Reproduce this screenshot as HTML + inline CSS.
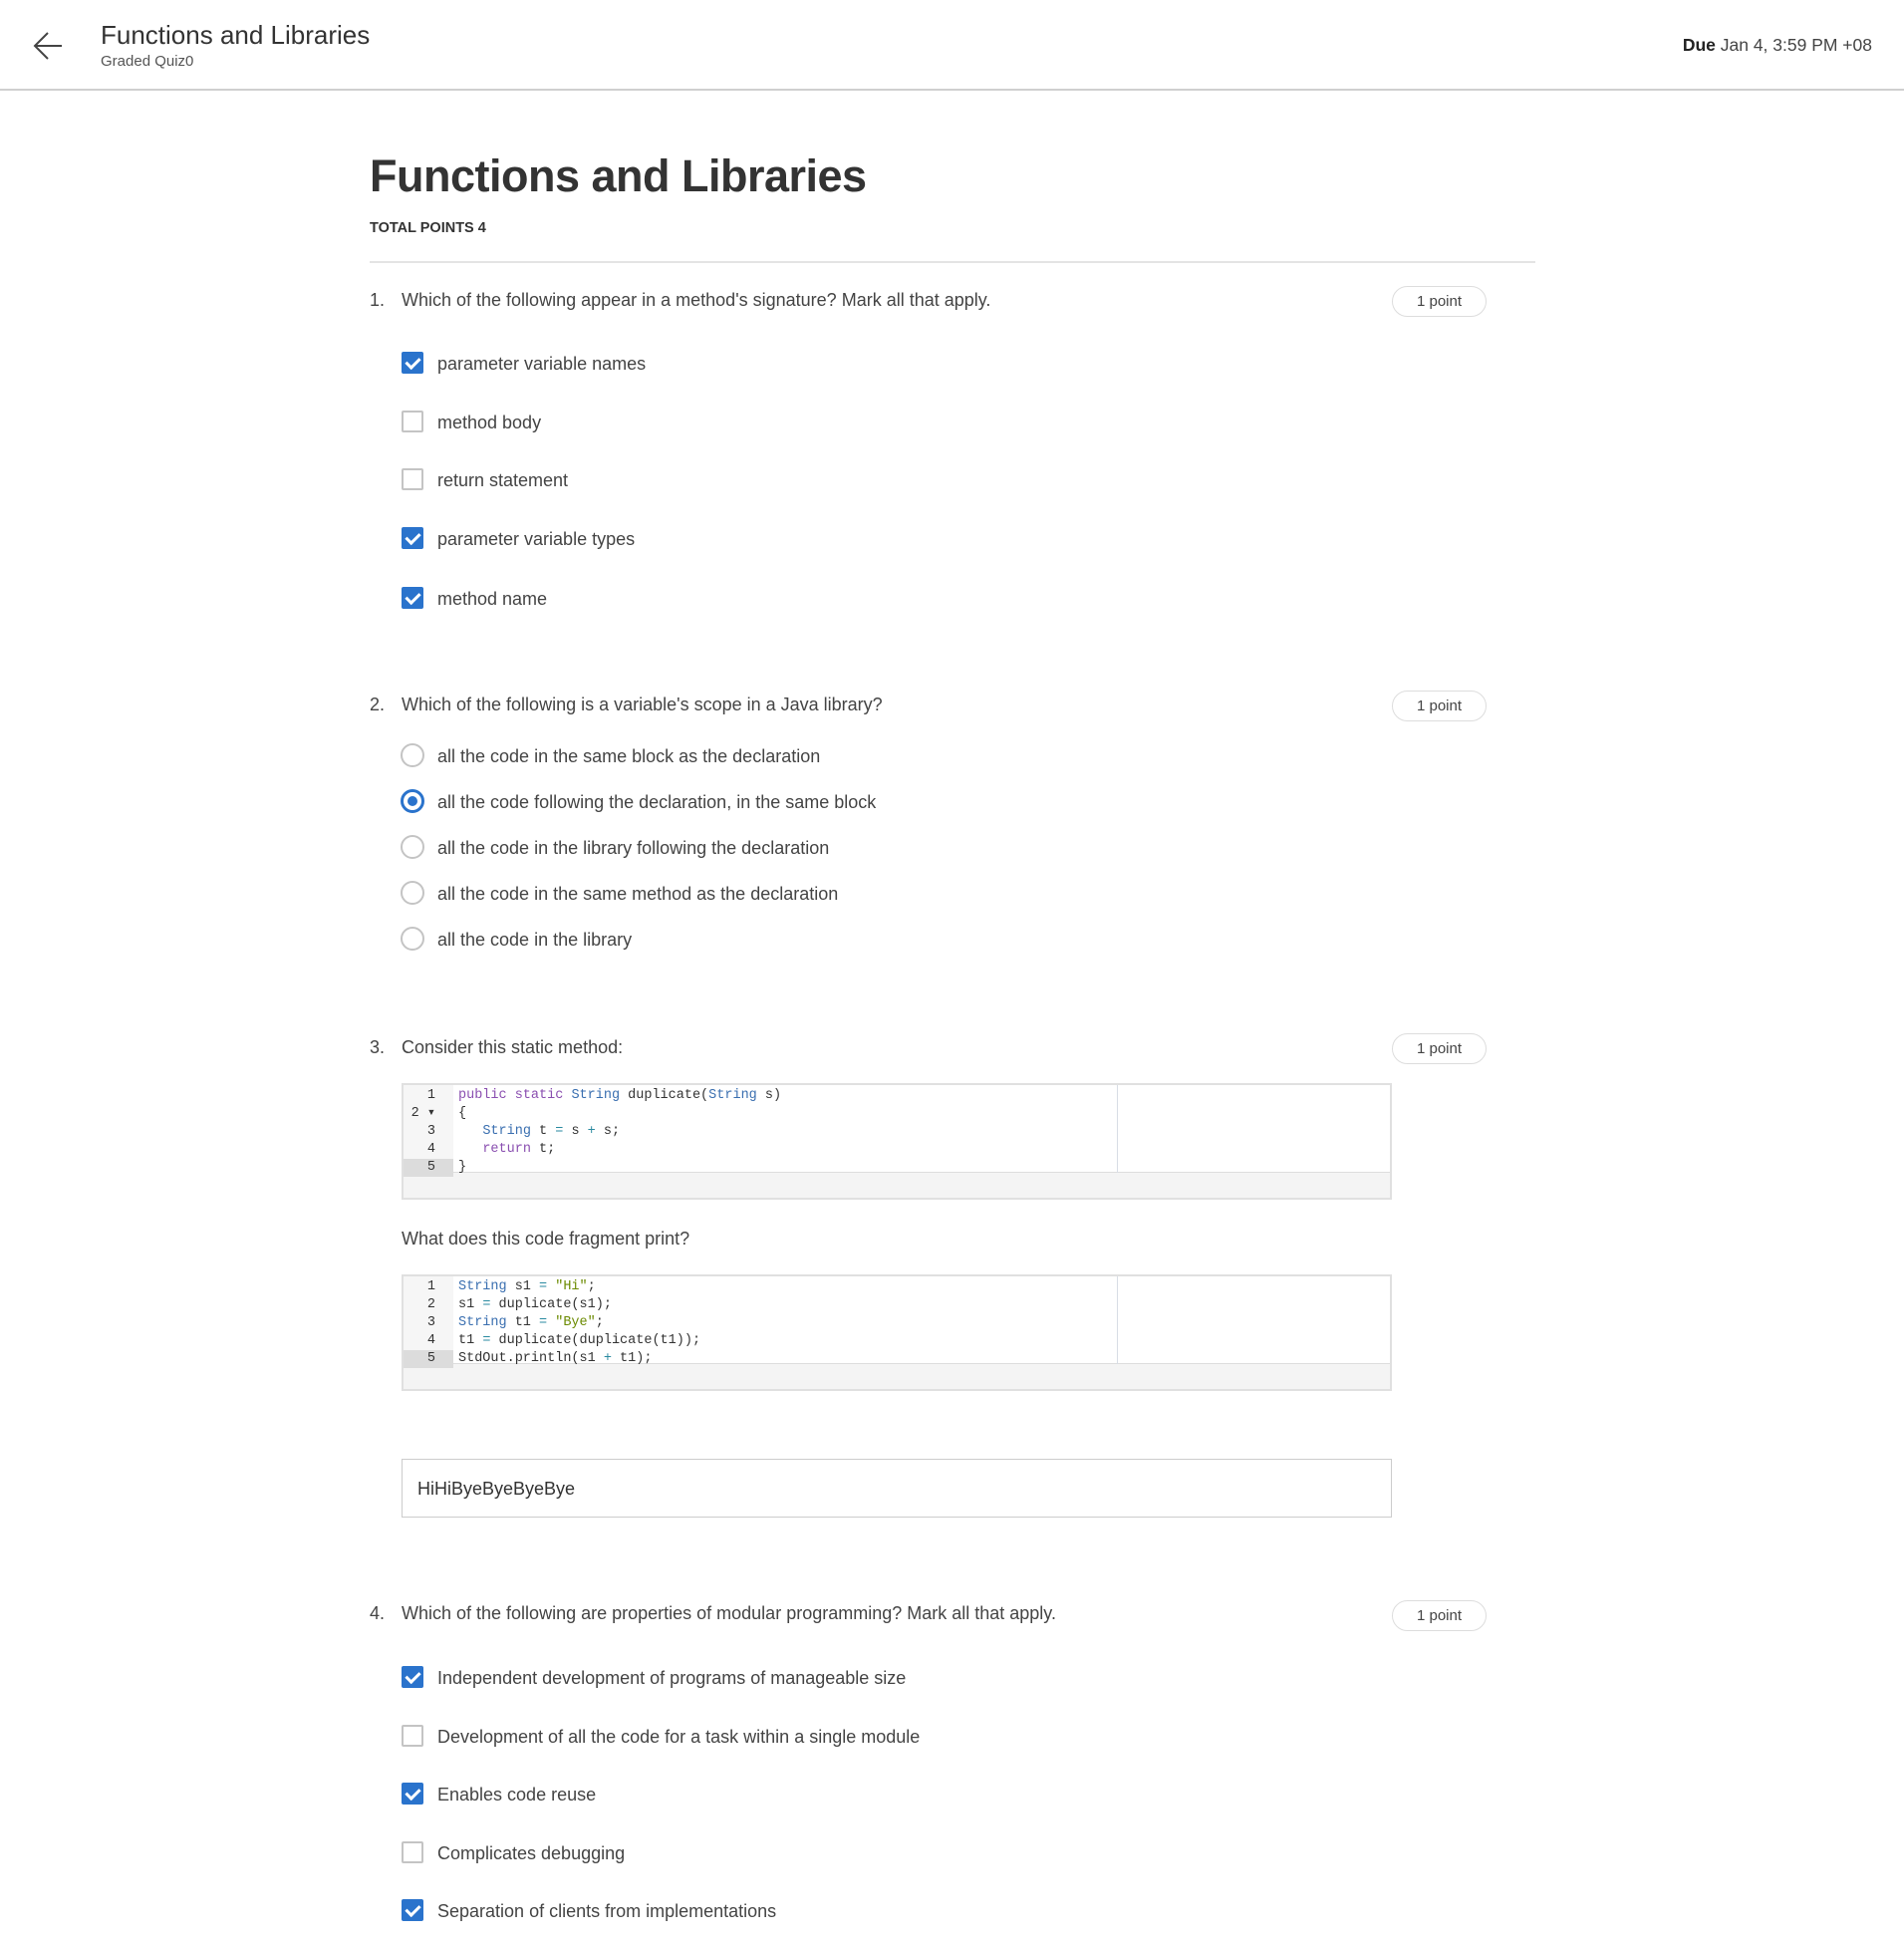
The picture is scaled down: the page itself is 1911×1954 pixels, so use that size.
<!DOCTYPE html>
<html><head><meta charset="utf-8"><style>
*{margin:0;padding:0;box-sizing:border-box}
body{width:1911px;height:1954px;background:#fff;font-family:"Liberation Sans",sans-serif;color:#3b3b3b;position:relative;overflow:hidden}
.a{position:absolute;white-space:nowrap}
.t{font-size:18px;color:#444;line-height:22px;margin-top:1px}
.cb{position:absolute;left:403px;width:22px;height:22px;border:2px solid #c4c4c4;border-radius:2px;background:#fff}
.cb.on{background:#2a73cc;border-color:#2a73cc}
.cb.on::after{content:"";position:absolute;left:5px;top:1px;width:6px;height:11px;border:solid #fff;border-width:0 3px 3px 0;transform:rotate(45deg)}
.rd{position:absolute;left:402px;width:24px;height:24px;border:2px solid #c4c4c4;border-radius:50%}
.rd.on{border:3px solid #2a73cc}
.rd.on::after{content:"";position:absolute;left:4px;top:4px;width:10px;height:10px;border-radius:50%;background:#2a73cc}
.pill{position:absolute;left:1397px;width:95px;height:31px;border:1px solid #ddd;border-radius:16px;font-size:15px;color:#444;text-align:center;line-height:29px}
.code{position:absolute;left:403px;width:994px;height:117px;border:2px solid #e0e0e0;background:#f4f4f4}
.code .in{position:absolute;left:0;top:0;right:0;height:88px;background:#fff;border-bottom:1px solid #ddd;font-family:"Liberation Mono",monospace;font-size:13.5px;line-height:18px;padding-top:2px}
.code .gut{position:absolute;left:0;top:0;width:50px;height:87px;background:#f6f6f6}
.code .div{position:absolute;left:716px;top:0;width:1px;height:88px;background:#d8dde5}
.ln{position:relative;height:18px;color:#333}
.ln .n{position:absolute;left:0;width:32px;text-align:right;color:#333}
.ln .c{position:absolute;left:55px}
.ln.last .n{background:#dcdcdc;width:50px;padding-right:18px}
.k{color:#8a4fb0}.s{color:#3a6fb0}.g{color:#6b8a00}.o{color:#2a8aa0}
</style></head><body>
<div class="a" style="left:0;top:89px;width:1911px;height:2px;background:#cfcfcf"></div>
<svg class="a" style="left:32px;top:30px" width="34" height="32" viewBox="0 0 34 32"><path d="M30 16H3M16 3L3 16l13 13" fill="none" stroke="#444" stroke-width="2"/></svg>
<div class="a" style="left:101px;top:20px;font-size:26px;color:#333">Functions and Libraries</div>
<div class="a" style="left:101px;top:53px;font-size:15px;color:#555">Graded Quiz0</div>
<div class="a" style="right:32px;top:35px;font-size:17.5px;color:#444"><b style="color:#222">Due</b> Jan 4, 3:59 PM +08</div>
<div class="a" style="left:371px;top:151px;font-size:45px;font-weight:bold;color:#333;letter-spacing:-0.5px">Functions and Libraries</div>
<div class="a" style="left:371px;top:221px;font-size:14.5px;font-weight:bold;color:#333">TOTAL POINTS 4</div>
<div class="a" style="left:371px;top:262px;width:1170px;height:2px;background:#e4e4e4"></div>

<div class="a t" style="left:371px;top:289px">1.</div>
<div class="a t" style="left:403px;top:289px">Which of the following appear in a method's signature? Mark all that apply.</div>
<div class="pill" style="top:287px">1 point</div>
<div class="cb on" style="top:353px"></div><div class="a t" style="left:439px;top:353px">parameter variable names</div>
<div class="cb" style="top:412px"></div><div class="a t" style="left:439px;top:412px">method body</div>
<div class="cb" style="top:470px"></div><div class="a t" style="left:439px;top:470px">return statement</div>
<div class="cb on" style="top:529px"></div><div class="a t" style="left:439px;top:529px">parameter variable types</div>
<div class="cb on" style="top:589px"></div><div class="a t" style="left:439px;top:589px">method name</div>

<div class="a t" style="left:371px;top:695px">2.</div>
<div class="a t" style="left:403px;top:695px">Which of the following is a variable's scope in a Java library?</div>
<div class="pill" style="top:693px">1 point</div>
<div class="rd" style="top:746px"></div><div class="a t" style="left:439px;top:747px">all the code in the same block as the declaration</div>
<div class="rd on" style="top:792px"></div><div class="a t" style="left:439px;top:793px">all the code following the declaration, in the same block</div>
<div class="rd" style="top:838px"></div><div class="a t" style="left:439px;top:839px">all the code in the library following the declaration</div>
<div class="rd" style="top:884px"></div><div class="a t" style="left:439px;top:885px">all the code in the same method as the declaration</div>
<div class="rd" style="top:930px"></div><div class="a t" style="left:439px;top:931px">all the code in the library</div>

<div class="a t" style="left:371px;top:1039px">3.</div>
<div class="a t" style="left:403px;top:1039px">Consider this static method:</div>
<div class="pill" style="top:1037px">1 point</div>
<div class="code" style="top:1087px"><div class="in"><div class="gut"></div><div class="div"></div>
<div class="ln"><span class="n">1</span><span class="c"><span class="k">public static</span> <span class="s">String</span> duplicate(<span class="s">String</span> s)</span></div>
<div class="ln"><span class="n">2 ▾</span><span class="c">{</span></div>
<div class="ln"><span class="n">3</span><span class="c">&nbsp;&nbsp;&nbsp;<span class="s">String</span> t <span class="o">=</span> s <span class="o">+</span> s;</span></div>
<div class="ln"><span class="n">4</span><span class="c">&nbsp;&nbsp;&nbsp;<span class="k">return</span> t;</span></div>
<div class="ln last"><span class="n">5</span><span class="c">}</span></div>
</div></div>
<div class="a t" style="left:403px;top:1231px">What does this code fragment print?</div>
<div class="code" style="top:1279px"><div class="in"><div class="gut"></div><div class="div"></div>
<div class="ln"><span class="n">1</span><span class="c"><span class="s">String</span> s1 <span class="o">=</span> <span class="g">"Hi"</span>;</span></div>
<div class="ln"><span class="n">2</span><span class="c">s1 <span class="o">=</span> duplicate(s1);</span></div>
<div class="ln"><span class="n">3</span><span class="c"><span class="s">String</span> t1 <span class="o">=</span> <span class="g">"Bye"</span>;</span></div>
<div class="ln"><span class="n">4</span><span class="c">t1 <span class="o">=</span> duplicate(duplicate(t1));</span></div>
<div class="ln last"><span class="n">5</span><span class="c">StdOut.println(s1 <span class="o">+</span> t1);</span></div>
</div></div>
<div class="a" style="left:403px;top:1464px;width:994px;height:59px;border:1px solid #ccc"></div>
<div class="a t" style="left:419px;top:1482px;color:#333">HiHiByeByeByeBye</div>

<div class="a t" style="left:371px;top:1607px">4.</div>
<div class="a t" style="left:403px;top:1607px">Which of the following are properties of modular programming? Mark all that apply.</div>
<div class="pill" style="top:1606px">1 point</div>
<div class="cb on" style="top:1672px"></div><div class="a t" style="left:439px;top:1672px">Independent development of programs of manageable size</div>
<div class="cb" style="top:1731px"></div><div class="a t" style="left:439px;top:1731px">Development of all the code for a task within a single module</div>
<div class="cb on" style="top:1789px"></div><div class="a t" style="left:439px;top:1789px">Enables code reuse</div>
<div class="cb" style="top:1848px"></div><div class="a t" style="left:439px;top:1848px">Complicates debugging</div>
<div class="cb on" style="top:1906px"></div><div class="a t" style="left:439px;top:1906px">Separation of clients from implementations</div>
</body></html>
